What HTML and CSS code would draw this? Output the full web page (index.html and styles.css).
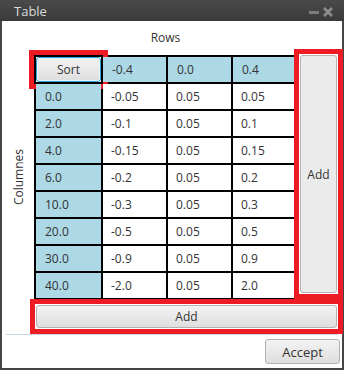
FILE: index.html
```html
<!DOCTYPE html>
<html lang="en">
<head>
    <meta charset="UTF-8">
    <meta name="viewport" content="width=device-width, initial-scale=1.0">
    <title>Table</title>
    <link rel="stylesheet" href="styles.css">
</head>
<body>
    <div class="window">
        <div class="titlebar">
            <span class="title">Table</span>
            <svg class="controls" width="30" height="21" viewBox="0 0 30 21">
                <rect x="1" y="11" width="10" height="3" fill="#7e7e7e"/>
                <path d="M16 8 L24 16 M24 8 L16 16" stroke="#8c8c8c" stroke-width="2.6"/>
            </svg>
        </div>
        <div class="panel">
            <div class="rows-label">Rows</div>
            <div class="cols-label"><span>Columnes</span></div>
            <div class="table">
                <div class="cell corner mark"><button class="btn sort">Sort</button></div>
                <div class="cell head">-0.4</div>
                <div class="cell head">0.0</div>
                <div class="cell head">0.4</div>

                <div class="cell head">0.0</div>
                <div class="cell">-0.05</div>
                <div class="cell">0.05</div>
                <div class="cell">0.05</div>

                <div class="cell head">2.0</div>
                <div class="cell">-0.1</div>
                <div class="cell">0.05</div>
                <div class="cell">0.1</div>

                <div class="cell head">4.0</div>
                <div class="cell">-0.15</div>
                <div class="cell">0.05</div>
                <div class="cell">0.15</div>

                <div class="cell head">6.0</div>
                <div class="cell">-0.2</div>
                <div class="cell">0.05</div>
                <div class="cell">0.2</div>

                <div class="cell head">10.0</div>
                <div class="cell">-0.3</div>
                <div class="cell">0.05</div>
                <div class="cell">0.3</div>

                <div class="cell head">20.0</div>
                <div class="cell">-0.5</div>
                <div class="cell">0.05</div>
                <div class="cell">0.5</div>

                <div class="cell head">30.0</div>
                <div class="cell">-0.9</div>
                <div class="cell">0.05</div>
                <div class="cell">0.9</div>

                <div class="cell head">40.0</div>
                <div class="cell">-2.0</div>
                <div class="cell">0.05</div>
                <div class="cell">2.0</div>
            </div>
            <div class="add-col mark"><button class="btn">Add</button></div>
            <div class="add-row mark"><button class="btn">Add</button></div>
        </div>
        <div class="separator"></div>
        <div class="footer">
            <button class="btn accept">Accept</button>
        </div>
    </div>
</body>
</html>
```

FILE: styles.css
```css
body {
    margin: 0;
    font-family: "Open Sans", "Noto Sans", sans-serif;
    font-size: 12px;
    color: #333;
}

.window {
    width: 344px;
    height: 370px;
    box-sizing: border-box;
    border: 2px solid #454545;
    border-top: none;
    background: #fff;
}

.titlebar {
    height: 21px;
    margin: 0 -2px;
    background: linear-gradient(#4a4a4a, #3a3a3a);
    display: flex;
    align-items: center;
    justify-content: space-between;
}

.title {
    padding-left: 14px;
    color: #dcdcdc;
    font-size: 13px;
}

.controls {
    margin-right: 6px;
}

.panel {
    display: grid;
    grid-template-columns: 32px 263px 45px;
    grid-template-rows: 34px 245px 34px;
}

.rows-label {
    grid-column: 2;
    grid-row: 1;
    display: flex;
    align-items: center;
    justify-content: center;
    padding-bottom: 2px;
}

.cols-label {
    grid-column: 1;
    grid-row: 2;
    display: flex;
    align-items: center;
    justify-content: center;
}

.cols-label span {
    writing-mode: vertical-rl;
    transform: rotate(180deg);
}

.table {
    grid-column: 2;
    grid-row: 2;
    display: grid;
    grid-template-columns: 65px 63px 63px 62px;
    grid-auto-rows: 25px;
    gap: 2px;
    padding: 2px;
    background: #000;
}

.cell {
    background: #fff;
    display: flex;
    align-items: center;
    padding-left: 8px;
}

.cell.head {
    background: #add8e6;
    padding-left: 9px;
}

.cell.corner {
    padding: 0;
    background: #fff;
}

/* red annotation frames */
.mark {
    outline: 5px solid #ed1c24;
    outline-offset: 1px;
}

.corner.mark {
    outline-offset: 2px;
}

.btn {
    font-family: inherit;
    font-size: 12px;
    color: #333;
    background: linear-gradient(#f3f3f3, #dedede);
    border: 1px solid #b3b3b3;
    border-radius: 3px;
    padding: 0;
    margin: 0;
    width: 100%;
    height: 100%;
}

.sort {
    border-color: #2aa3d6;
    box-shadow: inset 0 0 0 1px #e6f4fb;
}

.add-col {
    grid-column: 3;
    grid-row: 2;
    align-self: start;
    display: flex;
    width: 37px;
    height: 238px;
    margin-left: 3px;
}

.add-col .btn {
    background: #ebebeb;
}

.add-row {
    grid-column: 2 / 4;
    grid-row: 3;
    align-self: start;
    display: flex;
    width: 301px;
    height: 23px;
    margin: 5px 0 0 2px;
}

.separator {
    height: 1px;
    margin: 0 4px;
    background: #c9d8e0;
}

.footer {
    display: flex;
    justify-content: flex-end;
    padding: 4px 2px 0 0;
}

.accept {
    width: 75px;
    height: 25px;
    font-size: 13px;
}
```
